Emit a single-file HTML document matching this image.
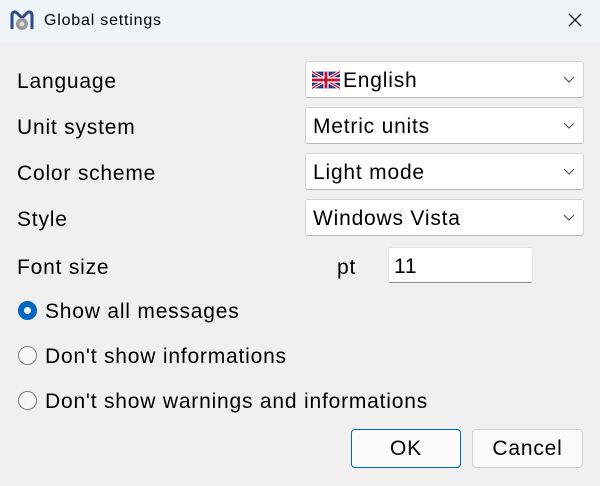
<!DOCTYPE html>
<html><head><style>
*{box-sizing:border-box;margin:0;padding:0}
body{width:600px;height:486px;background:#f0f0f0;font-family:"Liberation Sans",sans-serif;color:#000;position:relative;overflow:hidden;letter-spacing:0.8px}
.t{position:absolute;left:0;top:0;width:600px;height:42px;background:#eff4f9}
.tt{position:absolute;left:44px;top:12px;font-size:16px}
.x{position:absolute;left:566px;top:11px}
.l{position:absolute;left:17px;font-size:21px}
.c{position:absolute;left:305px;width:279px;height:37px;background:#fff;border:1px solid #d4d4d4;border-bottom-color:#b8b8b8;border-radius:3px;font-size:21px;padding:7px 0 0 7px}
.c svg.ch{position:absolute;right:8px;top:14px}
.r{position:absolute;left:18px;width:19px;height:19px;border-radius:50%;border:1px solid #7a7a7a;background:#f6f6f6}
.rl{position:absolute;left:45px;font-size:21px}
.b{position:absolute;top:429px;height:39px;background:#fbfbfb;border:1px solid #d0d0d0;border-radius:4px;font-size:21px;text-align:center;line-height:38px}
</style></head><body>
<div class="t">
<svg style="position:absolute;left:10px;top:9px" width="24" height="24" viewBox="0 0 24 24"><path d="M2 20V6c0-3 3-4 5-2l5 5 5-5c2-2 5-1 5 2v14" fill="none" stroke="#2a4a8c" stroke-width="3"/><circle cx="12" cy="15" r="6" fill="#999"/><circle cx="12" cy="15" r="2.5" fill="#ddd"/></svg>
<div class="tt">Global settings</div>
<svg class="x" width="18" height="18" viewBox="0 0 18 18"><path d="M3 3L15 15M15 3L3 15" stroke="#222" stroke-width="1.4"/></svg>
</div>
<div class="l" style="top:70px">Language</div>
<div class="l" style="top:116px">Unit system</div>
<div class="l" style="top:162px">Color scheme</div>
<div class="l" style="top:208px">Style</div>
<div class="l" style="top:256px">Font size</div>
<div class="l" style="left:337px;top:256px">pt</div>
<div class="c" style="top:61px;padding-left:6px"><svg width="28" height="18" viewBox="0 0 60 36" style="vertical-align:-2px;margin-right:3px"><rect width="60" height="36" fill="#1f3a7a" rx="4"/><path d="M0 0L60 36M60 0L0 36" stroke="#fff" stroke-width="7"/><path d="M0 0L60 36M60 0L0 36" stroke="#c8102e" stroke-width="3"/><path d="M30 0V36M0 18H60" stroke="#fff" stroke-width="11"/><path d="M30 0V36M0 18H60" stroke="#c8102e" stroke-width="6"/></svg>English<svg class="ch" width="12" height="8" viewBox="0 0 12 8"><path d="M1 1l5 5 5-5" fill="none" stroke="#555" stroke-width="1.2"/></svg></div>
<div class="c" style="top:107px">Metric units<svg class="ch" width="12" height="8" viewBox="0 0 12 8"><path d="M1 1l5 5 5-5" fill="none" stroke="#555" stroke-width="1.2"/></svg></div>
<div class="c" style="top:153px">Light mode<svg class="ch" width="12" height="8" viewBox="0 0 12 8"><path d="M1 1l5 5 5-5" fill="none" stroke="#555" stroke-width="1.2"/></svg></div>
<div class="c" style="top:199px">Windows Vista<svg class="ch" width="12" height="8" viewBox="0 0 12 8"><path d="M1 1l5 5 5-5" fill="none" stroke="#555" stroke-width="1.2"/></svg></div>
<div class="c" style="left:388px;width:145px;top:247px;height:36px;border-color:#e5e5e5;border-bottom-color:#8a8a8a;padding-left:5px">11</div>
<div class="r" style="top:301px;background:#0067c0;border-color:#0067c0"><div style="position:absolute;left:5px;top:5px;width:7px;height:7px;border-radius:50%;background:#fff"></div></div>
<div class="rl" style="top:300px">Show all messages</div>
<div class="r" style="top:346px"></div>
<div class="rl" style="top:345px">Don't show informations</div>
<div class="r" style="top:391px"></div>
<div class="rl" style="top:390px">Don't show warnings and informations</div>
<div class="b" style="left:351px;width:110px;border-color:#0067c0">OK</div>
<div class="b" style="left:472px;width:111px">Cancel</div>
</body></html>
